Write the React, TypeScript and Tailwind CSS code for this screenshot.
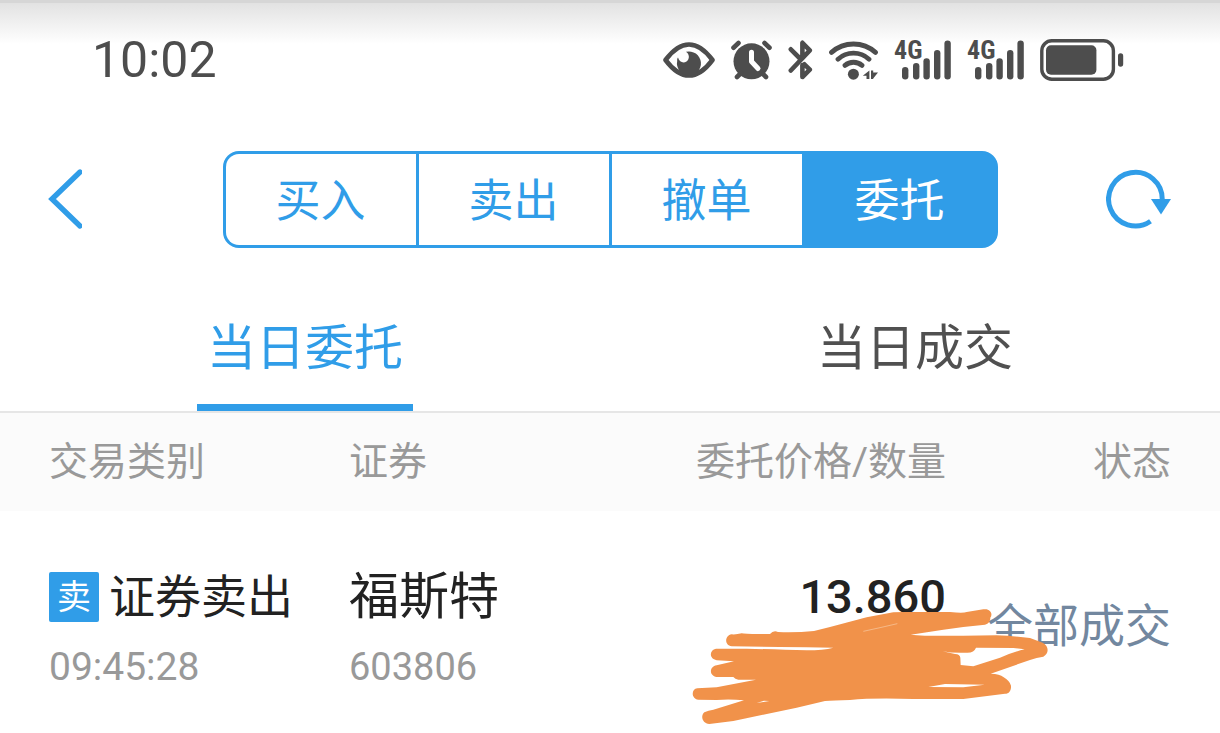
const ACTIONS = ['买入', '卖出', '撤单', '委托'];
const TABS = ['当日委托', '当日成交'];

function EyeIcon() {
  return (
    <svg width="52" height="36" viewBox="0 0 52 36" fill="none">
      <path
        d="M2.5 18C10 8 18 2.5 26 2.5S42 8 49.5 18C42 28 34 33.5 26 33.5S10 28 2.5 18Z"
        stroke="currentColor"
        strokeWidth="4.6"
        strokeLinejoin="round"
      />
      <path
        d="M23 9.8A12 12 0 1 1 14.2 19C14 17.5 14.5 16 15 15.6C16.5 20.5 20.5 21.5 23.5 19.5C27 17 26.5 12 23 9.8Z"
        fill="currentColor"
      />
    </svg>
  );
}

function AlarmIcon() {
  return (
    <svg width="41" height="40" viewBox="0 0 41 40" fill="none" strokeLinecap="round">
      <circle cx="20.5" cy="21.3" r="18" fill="currentColor" />
      <path d="M2.5 7.7L7.5 3M33.5 3L38.5 7.7M6 37L10 33M31 33L35 37" stroke="currentColor" strokeWidth="4.6" />
      <path d="M20.5 12.2V21.5L27 28.5" stroke="white" strokeWidth="5" strokeLinejoin="round" />
    </svg>
  );
}

function BluetoothIcon() {
  return (
    <svg
      width="25"
      height="40"
      viewBox="0 0 25 40"
      fill="none"
      stroke="currentColor"
      strokeWidth="4.6"
      strokeLinecap="round"
      strokeLinejoin="round"
    >
      <path d="M2.8 9.3L12 18.5M2.8 30.5L21.8 10.3L14.4 2.8V17" />
      <path d="M14.4 25V37L21.8 29.7L16.4 24.3" />
    </svg>
  );
}

function WifiIcon() {
  return (
    <svg width="49" height="40" viewBox="0 0 49 40" fill="none">
      <path
        d="M2.5 12.4A33 33 0 0 1 46.5 12.4M9 19.2A23 23 0 0 1 40 19.2M16 25.4A13 13 0 0 1 33 25.4"
        stroke="currentColor"
        strokeWidth="4.8"
        strokeLinecap="round"
      />
      <circle cx="24.4" cy="34.2" r="5.5" fill="currentColor" />
      <path d="M40.4 30.5L33.8 35.8H37.5V39H40.4ZM42 30.5H44.2V39H42ZM44.2 32.4H49L44.2 38.5Z" fill="currentColor" />
    </svg>
  );
}

function SignalIcon() {
  return (
    <div className="relative">
      <svg width="57" height="40" viewBox="0 0 57 40" fill="currentColor">
        <rect x="8" y="27" width="6.4" height="12.4" rx="3.2" />
        <rect x="19" y="23" width="6.4" height="16.4" rx="3.2" />
        <rect x="29.4" y="18.2" width="6.4" height="21.2" rx="3.2" />
        <rect x="40" y="10" width="6.4" height="29.4" rx="3.2" />
        <rect x="50.4" y="0.4" width="6.4" height="39" rx="3.2" />
      </svg>
      <span className="absolute left-0 top-0 text-[26px] leading-5 font-bold font-['Liberation_Sans_Narrow','Roboto_Condensed','Roboto',sans-serif]">
        4G
      </span>
    </div>
  );
}

function BatteryIcon() {
  return (
    <svg width="84" height="42" viewBox="0 0 84 42" fill="currentColor">
      <rect x="1.8" y="1.8" width="71.6" height="38.4" rx="10" fill="none" stroke="currentColor" strokeWidth="3.4" />
      <rect x="6" y="6.3" width="50.4" height="29.4" rx="5" />
      <rect x="78" y="14.3" width="5.2" height="13.4" rx="2.6" />
    </svg>
  );
}

function Scribble() {
  return (
    <svg className="absolute top-10 -right-[104px]" width="360" height="120" viewBox="30 140 1080 360">
      <path
        fill="#f1924a"
        d="M155 222Q170 223 185 219Q195 222 270 221Q280 209 294 215Q350 217 402 212L450 200L560 171L640 156Q660 154 700 155H810Q850 160 860 155L910 147C930 143 940 160 931 172Q932 188 915 193L850 200L790 208L692 223Q740 228 850 226L950 225Q1000 227 1050 233L1088 247C1108 258 1107 280 1090 289Q1070 292 1050 299L932 340Q960 341 970 350Q990 362 993 376C994 390 988 400 975 400L850 416H700Q580 412 510 419Q460 420 435 422L350 442L160 482L88 491C68 490 60 468 73 456Q85 450 100 448L192 420Q150 416 110 419L55 418C32 414 34 386 52 384L110 381L228 358H175Q165 356 160 350L110 350C86 346 88 318 110 315L162 303L110 300C86 296 88 268 108 265H200Q300 268 380 270Q430 270 460 262Q380 261 300 260L155 258C132 254 134 226 155 222Z"
      />
      {/* gaps left between the strokes */}
      <path
        fill="white"
        d="M788 273Q820 279 860 277Q882 278 888 262L1000 263L1034 267Q1000 275 960 292L880 318L842 314L841 292Q840 282 825 281ZM745 380L795 371L914 373L850 381ZM230 428L252 421L268 422L250 425Z"
      />
      <path d="M550 213L600 202L652 190" fill="none" stroke="#f8cba6" strokeWidth="2" />
    </svg>
  );
}

export default function App() {
  return (
    <div className="min-h-screen bg-white text-[#222222] font-['Roboto','Noto_Sans_CJK_SC',sans-serif]">
      {/* Status bar */}
      <div className="h-[120px] flex items-center justify-between pl-[92px] pr-24 pb-1 border-t-[3px] border-[#d6d6d6] bg-linear-to-b from-[#e2e2e2] to-white to-35% text-[#4d4d4d]">
        <span className="text-[50px] leading-none">10:02</span>
        <div className="flex items-center gap-4">
          <EyeIcon />
          <AlarmIcon />
          <BluetoothIcon />
          <WifiIcon />
          <SignalIcon />
          <SignalIcon />
          <BatteryIcon />
        </div>
      </div>

      {/* Navigation */}
      <header className="h-[158px] grid grid-cols-[1fr_auto_1fr] items-center px-12 text-[#309de8]">
        <button type="button" aria-label="返回" className="justify-self-start">
          <svg width="34" height="60" viewBox="0 0 34 60" fill="none">
            <path d="M32 3L4 30L32 57" stroke="currentColor" strokeWidth="5.4" strokeLinecap="round" />
          </svg>
        </button>
        <nav className="w-[775px] h-[97px] flex border-[3px] border-[#309de8] bg-[#309de8] rounded-2xl overflow-hidden divide-x-[3px] divide-[#309de8]">
          {ACTIONS.map((label) => (
            <button
              key={label}
              type="button"
              className={`flex-1 pt-1 text-[45px] leading-none ${label === '委托' ? 'bg-[#309de8] text-white' : 'bg-white'}`}
            >
              {label}
            </button>
          ))}
        </nav>
        <button type="button" aria-label="刷新" className="justify-self-end">
          <svg width="66" height="60" viewBox="0 0 66 60" fill="none">
            <path d="M44.5 52.3A26.8 26.8 0 1 1 56.2 31" stroke="currentColor" strokeWidth="5" />
            <path d="M45 30H65L55 45.5Z" fill="currentColor" />
          </svg>
        </button>
      </header>

      {/* Tabs */}
      <div className="h-[135px] grid grid-cols-2 border-b-2 border-[#e6e6e6]">
        {TABS.map((label, i) => (
          <button
            key={label}
            type="button"
            className={`relative pt-2 text-[49px] leading-none ${i === 0 ? 'text-[#309de8]' : 'text-[#505050]'}`}
          >
            {label}
            {i === 0 && <span className="absolute bottom-0 left-1/2 -translate-x-1/2 w-[216px] h-[7px] bg-[#309de8]" />}
          </button>
        ))}
      </div>

      {/* Orders */}
      <table className="w-full table-fixed text-left">
        <thead className="bg-[#fbfbfb] text-[39px] leading-none text-[#999999]">
          <tr className="h-[98px]">
            <th className="w-[349px] pl-[49px] font-normal">交易类别</th>
            <th className="w-[252px] font-normal">证券</th>
            <th className="font-normal text-right">委托价格/数量</th>
            <th className="w-[274px] pr-[49px] font-normal text-right">状态</th>
          </tr>
        </thead>
        <tbody>
          <tr>
            <td className="pl-[49px] pt-14 pb-[46px] align-top">
              <div className="h-[60px] flex items-center gap-[10px] text-[46px] leading-none">
                <span className="size-[50px] flex items-center justify-center rounded-xs bg-[#309de8] text-white text-[34px]">卖</span>
                证券卖出
              </div>
              <div className="mt-5 text-[39px] leading-10 text-[#999999]">09:45:28</div>
            </td>
            <td className="pt-14 align-top">
              <div className="text-[50px] leading-[60px]">福斯特</div>
              <div className="mt-5 text-[38px] leading-10 text-[#999999]">603806</div>
            </td>
            <td className="pt-14 align-top text-right">
              <div className="relative text-[47px] leading-[60px] font-medium">
                13.860
                <Scribble />
              </div>
            </td>
            <td className="pt-2 pr-[49px] text-right text-[46px] leading-none text-[#72879f]">全部成交</td>
          </tr>
        </tbody>
      </table>
    </div>
  );
}
